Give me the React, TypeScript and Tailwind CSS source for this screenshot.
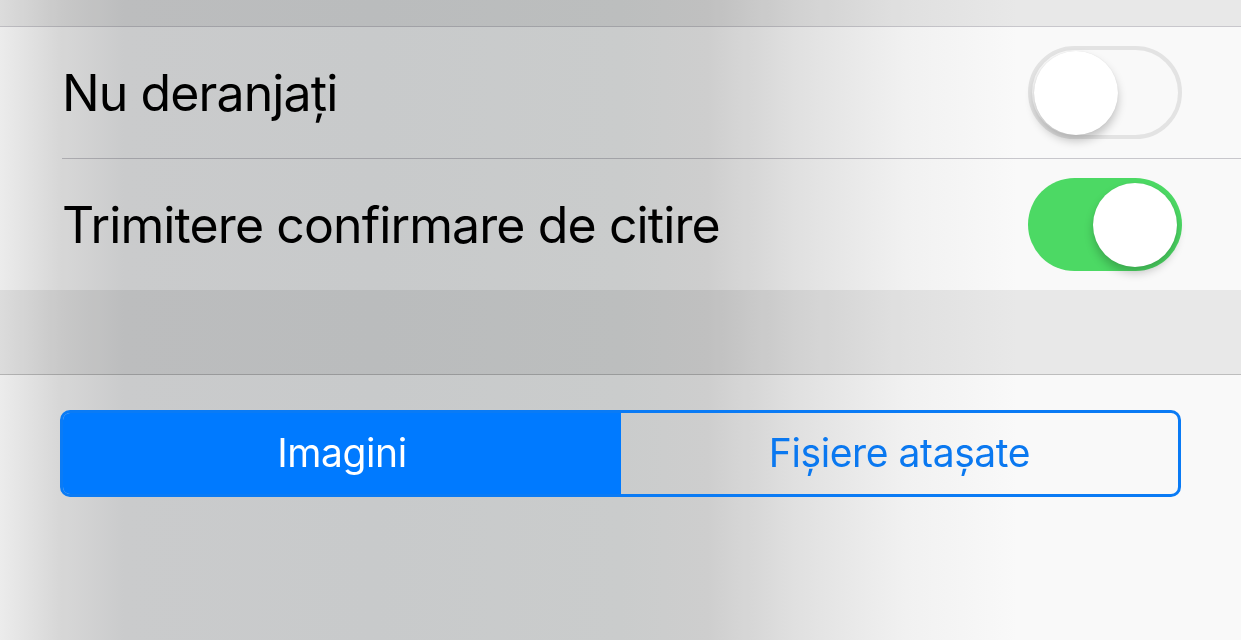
import React from "react";

function Toggle({ on }: { on: boolean }) {
  if (on) {
    return (
      <div className="relative z-10 flex h-[93px] w-[154px] items-center justify-end rounded-full bg-[#4cd964] pr-[5px]">
        <div className="h-[84px] w-[84px] rounded-full bg-white shadow-[0_6px_10px_rgba(0,0,0,0.22),0_0_1px_rgba(0,0,0,0.1)]" />
      </div>
    );
  }
  return (
    <div className="relative z-10 flex h-[93px] w-[154px] items-center rounded-full border-[4px] border-[#e3e3e3] bg-[#f9f9f9] pl-[2px]">
      <div className="h-[84px] w-[84px] rounded-full bg-white shadow-[0_6px_10px_rgba(0,0,0,0.22),0_0_1px_rgba(0,0,0,0.1)]" />
    </div>
  );
}

function Row({ label, on, last }: { label: string; on: boolean; last?: boolean }) {
  return (
    <div className="pl-[62px]">
      <div
        className={
          "flex items-center justify-between pr-[59px] " +
          (last ? "h-[131px]" : "h-[132px] border-b border-[#c8c7cc]")
        }
      >
        <span className="text-[50px] leading-none text-black tracking-[-0.9px]">{label}</span>
        <Toggle on={on} />
      </div>
    </div>
  );
}

export default function App() {
  return (
    <div
      className="relative h-[640px] w-[1241px] overflow-hidden bg-[#f9f9f9]"
      style={{ fontFamily: "Inter, 'Noto Sans', sans-serif" }}
    >
      <div className="h-[27px] border-b border-[#c8c7cc] bg-[#e8e8e8]" />
      <div className="bg-[#f9f9f9]">
        <Row label="Nu deranjați" on={false} />
        <Row label="Trimitere confirmare de citire" on={true} last />
      </div>
      <div className="h-[85px] border-b border-[#bdbdbd] bg-[#e8e8e8]" />
      <div className="px-[60px] pt-[35px]">
        <div className="relative z-10 flex h-[87px] overflow-hidden rounded-[10px] border-[3px] border-[#0a7bf5]">
          <div className="flex w-[558px] items-center justify-center bg-[#007aff] text-[39px] tracking-[-0.4px] text-white">
            Imagini
          </div>
          <div className="flex flex-1 items-center justify-center text-[39px] tracking-[-0.4px] text-[#0a78f0]">
            Fișiere atașate
          </div>
        </div>
      </div>
      <div
        className="pointer-events-none absolute inset-0 mix-blend-multiply"
        style={{
          background:
            "linear-gradient(90deg, #f2f2f2 0%, #dcdcdc 5%, #cfd0d1 10%, #cdcfd0 30%, #cfd1d1 50%, #d3d3d3 57%, #e6e6e6 64%, #f7f7f7 73%, #ffffff 82%)",
        }}
      />
    </div>
  );
}
